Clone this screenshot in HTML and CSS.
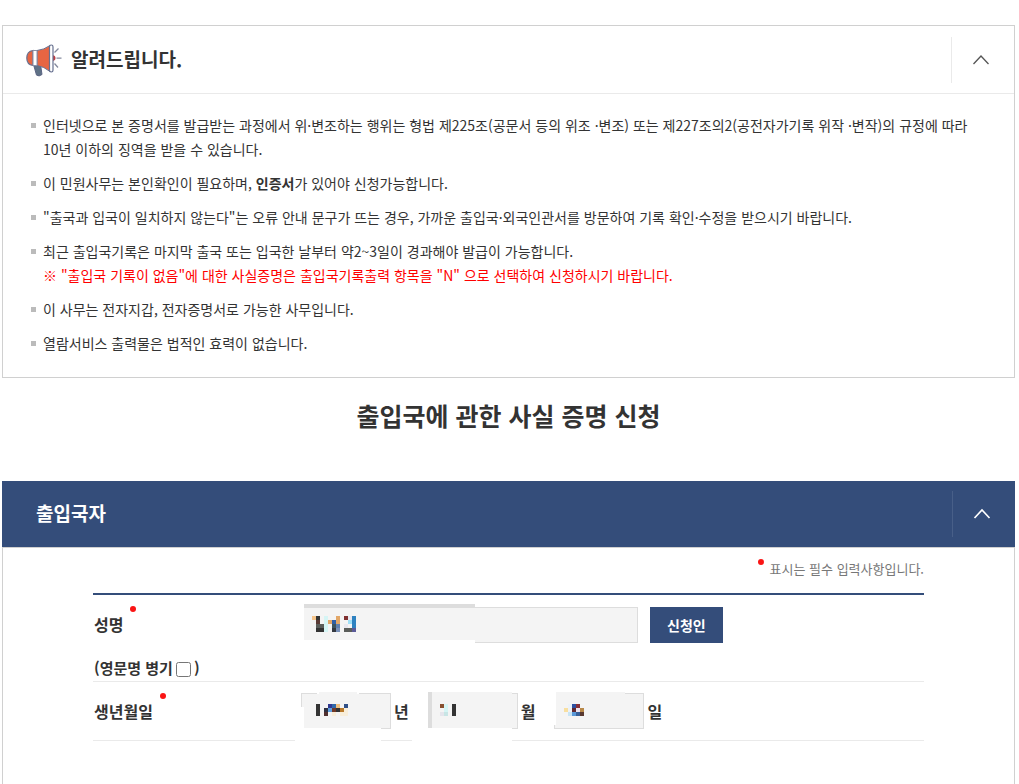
FILE: index.html
```html
<!DOCTYPE html>
<html lang="ko">
<head>
<meta charset="utf-8">
<meta name="viewport" content="width=device-width, initial-scale=1">
<title>출입국에 관한 사실 증명 신청</title>
<link rel="stylesheet" href="styles.css">
</head>
<body>
<main class="page">
  <section class="notice">
    <header class="notice-head">
      <svg class="megaphone" viewBox="0 0 36 34" width="36" height="34" aria-hidden="true">
        <path d="M7.500 21.500h7l1.500 10q-3 2.500-5.500.6z" fill="#5f7186" stroke="#5b6483" stroke-width="1"/>
        <path d="M7 7.500C3 8 .8 11 .8 15s2.200 7 6.200 7.500z" fill="#e76542" stroke="#66708f" stroke-width="1.200"/>
        <path d="M11 7.500q7-.7 13-5v26q-6-5-13-6z" fill="#e76542" stroke="#66708f" stroke-width="1"/>
        <path d="M7 7.500h4v15H7z" fill="#fff" stroke="#8b91a8" stroke-width="1"/>
        <path d="M26.500 12q3 .5 3 3t-3 3z" fill="#bd3b40"/>
        <rect x="23.500" y="2" width="3.500" height="27" rx="1.700" fill="#fff" stroke="#66708f" stroke-width="1.200"/>
        <path d="M28.500 9.500l4-4M30.500 15.200h5M28.500 20.500l3.500 4" stroke="#858a9e" stroke-width="1.300" fill="none"/>
      </svg>
      <h2 class="panel-title">알려드립니다.</h2>
      <button class="toggle" type="button" aria-label="접기">
        <svg viewBox="0 0 18 12" width="18" height="12" aria-hidden="true"><path d="M1.500 10 9 2l7.500 8" fill="none" stroke="currentColor" stroke-width="1.300"/></svg>
      </button>
    </header>
    <ul class="notice-list">
      <li>인터넷으로 본 증명서를 발급받는 과정에서 위·변조하는 행위는 형법 제225조(공문서 등의 위조 ·변조) 또는 제227조의2(공전자가기록 위작 ·변작)의 규정에 따라<br>10년 이하의 징역을 받을 수 있습니다.</li>
      <li>이 민원사무는 본인확인이 필요하며, <strong>인증서</strong>가 있어야 신청가능합니다.</li>
      <li>"출국과 입국이 일치하지 않는다"는 오류 안내 문구가 뜨는 경우, 가까운 출입국·외국인관서를 방문하여 기록 확인·수정을 받으시기 바랍니다.</li>
      <li>최근 출입국기록은 마지막 출국 또는 입국한 날부터 약2~3일이 경과해야 발급이 가능합니다.<br><span class="warn">※ "출입국 기록이 없음"에 대한 사실증명은 출입국기록출력 항목을 "N" 으로 선택하여 신청하시기 바랍니다.</span></li>
      <li>이 사무는 전자지갑, 전자증명서로 가능한 사무입니다.</li>
      <li>열람서비스 출력물은 법적인 효력이 없습니다.</li>
    </ul>
  </section>

  <h1 class="page-title">출입국에 관한 사실 증명 신청</h1>

  <section class="applicant">
    <header class="applicant-head">
      <h2 class="panel-title">출입국자</h2>
      <button class="toggle" type="button" aria-label="접기">
        <svg viewBox="0 0 18 12" width="18" height="12" aria-hidden="true"><path d="M1.500 10 9 2l7.500 8" fill="none" stroke="currentColor" stroke-width="1.700"/></svg>
      </button>
    </header>
    <form class="form">
      <p class="required-note"><span class="dot"></span>표시는 필수 입력사항입니다.</p>
      <div class="rows">
        <div class="row">
          <div class="labels">
            <label class="name" for="name">성명<span class="dot"></span></label>
            <div class="english"><label for="english">(영문명 병기</label><input id="english" type="checkbox">)</div>
          </div>
          <div class="fields">
            <span class="field field-name">
              <input id="name" type="text" readonly>
              <svg class="mask" viewBox="0 0 175 42" width="175" height="42" shape-rendering="crispEdges" aria-hidden="true">
                <path fill="#fff" d="M0 0h174v41H0z"/><path fill="#ddd" d="M3 1h171v4H3z"/><path fill="#f4f4f4" d="M3 5h171v32H3z"/>
                <g transform="translate(11 13)">
                  <path fill="#f5c48a" d="M0 0h4v4H0z"/><path fill="#333" d="M4 0h4v4H4zM4 12h8v4H4z"/><path fill="#5a3a35" d="M4 4h4v4H4z"/>
                  <path fill="#5a5d5a" d="M4 8h8v4H4zM32 12h8v4h-8z"/><path fill="#d5f5f5" d="M12 0h4v16h-4z"/>
                  <path fill="#e2a768" d="M24 0h4v8h-4zM16 4h4v4h-4z"/><path fill="#3060a8" d="M20 4h4v4h-4z"/>
                  <path fill="#3d5560" d="M20 8h4v4h-4z"/><path fill="#5f80b0" d="M24 8h4v4h-4z"/><path fill="#333840" d="M20 12h4v4h-4z"/>
                  <path fill="#7890b8" d="M24 12h4v4h-4z"/><path fill="#803030" d="M32 0h4v4h-4z"/><path fill="#e8e8f0" d="M36 0h4v4h-4zM32 8h4v4h-4z"/>
                  <path fill="#a0e0f8" d="M36 4h4v4h-4z"/><path fill="#2e82c0" d="M40 0h4v12h-4z"/><path fill="#5a5a98" d="M40 12h4v4h-4z"/>
                </g>
              </svg>
            </span>
            <button class="self" type="button">신청인</button>
          </div>
        </div>
        <div class="row row-birth">
          <div class="labels"><label class="name" for="year">생년월일<span class="dot"></span></label></div>
          <div class="fields dates">
            <span class="date"><span class="field">
              <input id="year" type="text" readonly>
              <svg class="mask mask-date" viewBox="-16 -3 106 52" width="106" height="52" shape-rendering="crispEdges" aria-hidden="true">
                <path fill="#fff" d="M0 14h3v22H0zM0 35h80v3H0zM-6 45h86v4H-6zM16 0h2v1h-2zM56 0h2v1h-2z"/><path fill="#f4f4f4" d="M18-1h38v5H18zM3 5h77v30H3zM1 1h3v7H1z"/>
                <g transform="translate(15 11)">
                  <path fill="#333" d="M0 0h4v12H0zM20 4h4v4h-4z"/><path fill="#303890" d="M12 0h4v4h-4z"/><path fill="#3068a8" d="M16 0h4v4h-4z"/>
                  <path fill="#f0c080" d="M20 0h4v4h-4z"/><path fill="#305088" d="M28 0h4v4h-4z"/><path fill="#303040" d="M8 4h4v4H8z"/>
                  <path fill="#60a0e0" d="M12 4h4v4h-4z"/><path fill="#703828" d="M16 4h4v4h-4z"/><path fill="#b87828" d="M24 4h4v4h-4z"/>
                  <path fill="#503030" d="M8 8h4v4H8z"/><path fill="#f8eeda" d="M16 8h4v4h-4zM24 8h4v4h-4zM28 4h4v8h-4z"/>
                </g>
              </svg>
            </span><label for="year">년</label></span>
            <span class="date"><span class="field">
              <input id="month" type="text" readonly>
              <svg class="mask mask-date" viewBox="-16 -3 106 52" width="106" height="52" shape-rendering="crispEdges" aria-hidden="true">
                <path fill="#fff" d="M0 35h84v3H0zM-16 45h100v4H-16z"/><path fill="#ddd" d="M0-1h4v36H0z"/><path fill="#f4f4f4" d="M4-1h80v36H4z"/>
                <g transform="translate(12 11)">
                  <path fill="#885030" d="M0 0h4v4H0z"/><path fill="#d5f5f5" d="M4 0h4v8H4z"/><path fill="#c8e5e5" d="M4 8h4v4H4z"/>
                  <path fill="#e5e5ec" d="M0 8h4v4H0z"/><path fill="#333" d="M12 0h4v12h-4z"/>
                </g>
              </svg>
            </span><label for="month">월</label></span>
            <span class="date"><span class="field">
              <input id="day" type="text" readonly>
              <svg class="mask mask-date" viewBox="-16 -3 106 52" width="106" height="52" shape-rendering="crispEdges" aria-hidden="true">
                <path fill="#fff" d="M0 0h2v32H0z"/><path fill="#f4f4f4" d="M2-1h69v36H2z"/>
                <g transform="translate(10 11)">
                  <path fill="#ecf2f8" d="M4 0h4v8H4z"/><path fill="#2d50a0" d="M8 0h4v4H8z"/><path fill="#883038" d="M12 0h4v4h-4z"/>
                  <path fill="#f8dfa0" d="M0 4h4v4H0z"/><path fill="#602830" d="M8 4h4v4H8z"/><path fill="#ece4f0" d="M12 4h4v4h-4z"/>
                  <path fill="#b88848" d="M16 4h4v4h-4z"/><path fill="#c8e4f4" d="M4 8h4v4H4z"/><path fill="#5898d8" d="M8 8h4v4H8z"/>
                  <path fill="#386098" d="M12 8h4v4h-4z"/><path fill="#583830" d="M16 8h4v4h-4z"/>
                </g>
              </svg>
            </span><label for="day">일</label></span>
          </div>
        </div>
      </div>
    </form>
  </section>
</main>
</body>
</html>
```
FILE: styles.css
```css
* { box-sizing: border-box; }
body {
  margin: 0;
  background: #fff;
  color: #333;
  font: 14px/24px "Noto Sans CJK KR", sans-serif;
}
h1, h2, p, ul { margin: 0; padding: 0; }
button, input { font: inherit; }

.page {
  display: flex;
  flex-direction: column;
  min-height: 100vh;
  padding: 25px 4px 0 2px;
}
.panel-title {
  padding-bottom: 2px;
  font-size: 19px;
  line-height: 28px;
  font-weight: 700;
}
.toggle {
  display: flex;
  align-items: center;
  justify-content: center;
  width: 63px;
  height: 46px;
  margin-left: auto;
  padding: 0 4px 0 0;
  border: 0;
  border-left: 1px solid #eaeaea;
  background: none;
  color: #555;
}

.notice { border: 1px solid #d0d0d0; }
.notice-head {
  display: flex;
  align-items: center;
  gap: 9px;
  height: 68px;
  padding-left: 23px;
  border-bottom: 1px solid #eaeaea;
}
.notice-list {
  display: flex;
  flex-direction: column;
  gap: 10px;
  padding: 19px 20px 22px 28px;
  list-style: none;
  word-break: keep-all;
}
.notice-list li { position: relative; padding-left: 12px; }
.notice-list li::before {
  content: "";
  position: absolute;
  top: 10px;
  left: 0;
  width: 5px;
  height: 5px;
  background: #bbb;
}
.warn { color: #f00; }

.page-title {
  padding: 17px 0 46px;
  font-size: 25px;
  line-height: 40px;
  font-weight: 700;
  text-align: center;
}

.applicant {
  flex: 1;
  display: flex;
  flex-direction: column;
}
.applicant-head {
  display: flex;
  align-items: center;
  height: 66px;
  padding-left: 34px;
  background: #344d7a;
  color: #fff;
}
.applicant-head .toggle { border-left-color: #485f88; color: #fff; }
.form {
  flex: 1;
  padding: 0 90px 40px;
  border: 1px solid #d0d0d0;
  border-bottom: 0;
}
.dot {
  flex: none;
  width: 6px;
  height: 6px;
  border-radius: 50%;
  background: #fa1414;
}
.required-note {
  display: flex;
  justify-content: flex-end;
  gap: 6px;
  padding: 9px 0 12px;
  color: #777;
  font-size: 13px;
}
.required-note .dot { margin-top: 2px; }
.rows { border-top: 2px solid #344d7a; }
.row {
  display: grid;
  grid-template-columns: 208px 1fr;
  height: 87px;
  padding-top: 12px;
  border-bottom: 1px solid #eaeaea;
  font-size: 16px;
  font-weight: 700;
}
.row-birth { height: 59px; padding-top: 11px; }
.labels { display: flex; flex-direction: column; gap: 20px; padding: 5px 0 0 1px; }
.row-birth .labels { padding-top: 6px; }
.name { display: flex; gap: 7px; }
.name .dot { margin-top: -6px; }
.english { display: flex; align-items: center; font-size: 15px; }
.english input { width: 15px; height: 15px; margin: 2px 3px 0 3px; }
.fields { display: flex; align-items: flex-start; gap: 12px; }
.field { position: relative; display: block; width: 90px; }
.field-name { width: 337px; }
.field input {
  display: block;
  width: 100%;
  height: 36px;
  padding: 0 8px;
  border: 1px solid #ddd;
  border-radius: 0;
  background: #f4f4f4;
}
.mask { position: absolute; top: -4px; left: 0; pointer-events: none; }
.mask-date { top: -3px; left: -16px; }
.self {
  height: 36px;
  padding: 0 17px;
  border: 0;
  background: #344d7a;
  color: #fff;
  font-size: 14px;
  font-weight: 700;
}
.dates { gap: 19px; }
.date { display: flex; align-items: center; gap: 3px; }
```
